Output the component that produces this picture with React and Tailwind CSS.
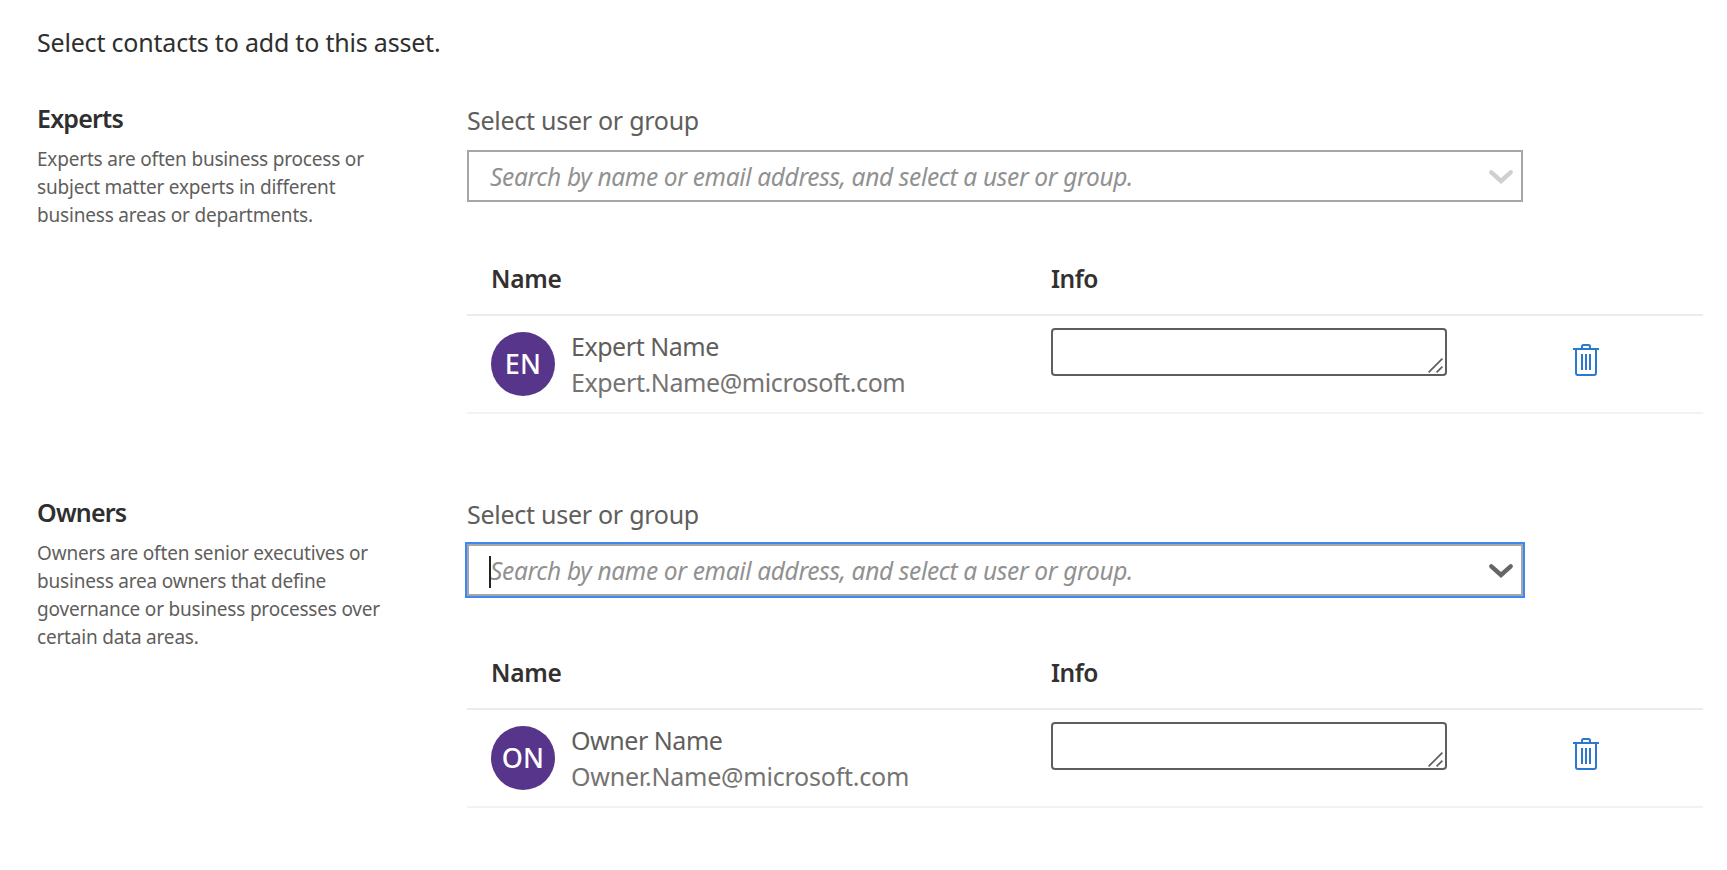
function ChevronDown({ className }) {
  return (
    <svg className={className} width="26" height="16" viewBox="0 0 26 16" fill="none" stroke="currentColor" strokeWidth="4.4" strokeLinecap="round" strokeLinejoin="miter">
      <path d="M3.3 3.3 L13 12 L22.7 3.3" />
    </svg>
  );
}

function TrashIcon() {
  return (
    <svg width="26" height="32" viewBox="0 0 26 32" fill="none" stroke="#2b78d0" strokeWidth="2">
      <path d="M0 5H26" />
      <path d="M9 5V2.5Q9 1 10.5 1H15.5Q17 1 17 2.5V5" />
      <path d="M3 5V29Q3 31 5 31H21Q23 31 23 29V5" />
      <path d="M9 10V26M13 10V26M17 10V26" />
    </svg>
  );
}

function InfoField() {
  return (
    <div className="mt-3 flex h-12 w-[396px] items-end justify-end self-start rounded border-2 border-[#605e5c] bg-white">
      <svg className="mr-0.5 mb-px" width="15" height="15" viewBox="0 0 15 15" fill="none" stroke="#605e5c" strokeWidth="1.7">
        <path d="M0.6 14.4L14.4 0.6M8.6 14.4L14.4 8.6" />
      </svg>
    </div>
  );
}

function UserPicker({ focused }) {
  return (
    <div
      className={
        "mt-3.5 flex h-[52px] w-[1056px] items-center justify-between border-2 border-[#a6a6a6] pr-[7px] pl-5 " +
        (focused ? "outline-2 outline-[#3f87f5]" : "")
      }
    >
      <div className="relative mt-0.5">
        {focused && <span className="absolute top-px left-0 h-8 w-0.5 bg-[#222222]" />}
        <span className="block pl-px text-[24.5px] leading-8 tracking-[-0.35px] whitespace-nowrap text-[#919191] italic">
          Search by name or email address, and select a user or group.
        </span>
      </div>
      <ChevronDown className={focused ? "mt-0.5 text-[#666666]" : "mt-0.5 text-[#cfcfcf]"} />
    </div>
  );
}

function ContactSection({ title, description, initials, name, email, emailClass, focused, className }) {
  return (
    <section className={"flex " + className}>
      <div className="w-[430px] shrink-0">
        <h2 className="text-[25px] leading-8 font-semibold tracking-[-0.8px] text-[#2f2f2f]">{title}</h2>
        <p className="mt-[11px] text-[19px] leading-7 tracking-[-0.19px] text-[#5f5e5c]">
          {description.map((line) => (
            <span key={line} className="block whitespace-nowrap">{line}</span>
          ))}
        </p>
      </div>
      <div className="w-[1236px] pt-0.5">
        <div className="text-[25px] leading-8 tracking-[-0.27px] text-[#605e5c]">Select user or group</div>
        <UserPicker focused={focused} />
        <div className="mt-[61px] grid h-[53px] grid-cols-[560px_1fr] border-b-2 border-[#ebebeb] pl-6 text-[24.5px] leading-8 font-semibold text-[#323130]">
          <span className="tracking-[-0.3px]">Name</span>
          <span className="tracking-[-0.5px]">Info</span>
        </div>
        <div className="grid h-[98px] grid-cols-[560px_522px_1fr] items-center border-b-2 border-[#f2f2f2] pl-6">
          <div className="flex items-center gap-4">
            <div className="flex size-16 items-center justify-center rounded-full bg-[#57358b] pb-0.5 text-[27px] leading-none font-medium tracking-[0.3px] text-white">
              {initials}
            </div>
            <div className="text-[25px] leading-9">
              <div className="tracking-[-0.46px] text-[#605e5c]">{name}</div>
              <div className={"text-[#757371] " + emailClass}>{email}</div>
            </div>
          </div>
          <InfoField />
          <div className="-mt-2">
            <TrashIcon />
          </div>
        </div>
      </div>
    </section>
  );
}

export default function App() {
  return (
    <main className="min-h-[870px] w-[1727px] bg-white pt-[26px] pl-[37px] font-['Noto_Sans','Open_Sans',sans-serif]">
      <p className="text-[25px] leading-8 tracking-[-0.2px] text-[#2f2f2f]">Select contacts to add to this asset.</p>
      <ContactSection
        className="mt-11"
        title="Experts"
        description={["Experts are often business process or", "subject matter experts in different", "business areas or departments."]}
        initials="EN"
        name="Expert Name"
        email="Expert.Name@microsoft.com"
        emailClass="tracking-[-0.4px]"
      />
      <ContactSection
        className="mt-[82px]"
        title="Owners"
        description={["Owners are often senior executives or", "business area owners that define", "governance or business processes over", "certain data areas."]}
        initials="ON"
        name="Owner Name"
        email="Owner.Name@microsoft.com"
        emailClass="tracking-[-0.22px]"
        focused
      />
    </main>
  );
}
